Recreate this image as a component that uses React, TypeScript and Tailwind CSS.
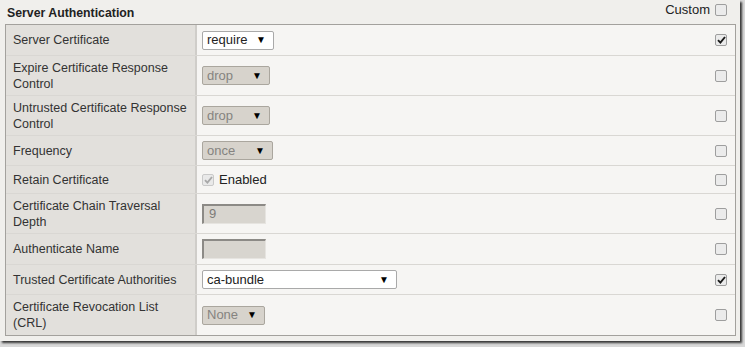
import React from "react";

const Arrow = () => <span className="text-[10px] leading-none text-black">▼</span>;

function Select({ value, width, disabled }: { value: string; width: number; disabled?: boolean }) {
  return (
    <div
      style={{ width }}
      className={
        "flex h-[19px] items-center justify-between rounded-[2px] border pl-[4px] pr-[7px] text-[13px] " +
        (disabled
          ? "border-[#aaa69e] bg-[#d7d3cc] text-[#858380]"
          : "border-[#a9a9a9] bg-white text-[#222]")
      }
    >
      <span>{value}</span>
      <Arrow />
    </div>
  );
}

function Check({ checked, disabled }: { checked?: boolean; disabled?: boolean }) {
  return (
    <div
      className={
        "flex h-[12px] w-[12px] items-center justify-center rounded-[2px] border " +
        (disabled ? "border-[#c9c9c9] bg-[#e9e9e9]" : "border-[#9e9e9e] bg-[#ebebeb]")
      }
    >
      {checked && (
        <svg width="9" height="8" viewBox="0 0 9 8">
          <path
            d="M1 4.2 L3.4 6.6 L8 1"
            fill="none"
            stroke={disabled ? "#a8a8a8" : "#1a1a1a"}
            strokeWidth="1.9"
          />
        </svg>
      )}
    </div>
  );
}

function Input({ value }: { value?: string }) {
  return (
    <div className="flex h-[20px] w-[64px] items-center border-t-2 border-l-2 border-r border-b border-t-[#8c8a86] border-l-[#8c8a86] border-r-[#e6e4e0] border-b-[#e6e4e0] bg-[#d8d5cf] pl-[5px] text-[13px] text-[#7d7b78]">
      {value}
    </div>
  );
}

type Row = { label: React.ReactNode; h: number; control: React.ReactNode; checked?: boolean };

const rows: Row[] = [
  { label: "Server Certificate", h: 30, control: <Select value="require" width={72} />, checked: true },
  { label: <>Expire Certificate Response<br />Control</>, h: 40, control: <Select value="drop" width={68} disabled /> },
  { label: <>Untrusted Certificate Response<br />Control</>, h: 40, control: <Select value="drop" width={68} disabled /> },
  { label: "Frequency", h: 30, control: <Select value="once" width={71} disabled /> },
  {
    label: "Retain Certificate",
    h: 28,
    control: (
      <div className="flex items-center gap-[5px]">
        <Check checked disabled />
        <span className="text-[13px] text-[#222]">Enabled</span>
      </div>
    ),
  },
  { label: <>Certificate Chain Traversal<br />Depth</>, h: 40, control: <Input value="9" /> },
  { label: "Authenticate Name", h: 31, control: <Input /> },
  { label: "Trusted Certificate Authorities", h: 30, control: <Select value="ca-bundle" width={195} />, checked: true },
  { label: <>Certificate Revocation List<br />(CRL)</>, h: 41, control: <Select value="None" width={63} disabled /> },
];

export default function App() {
  return (
    <div
      className="h-[347px] w-[745px] overflow-hidden bg-[#d9d9d9]"
      style={{ fontFamily: '"Liberation Sans", Arial, sans-serif' }}
    >
      <div className="h-[341px] w-[740px] bg-[#f0efec] shadow-[2px_2px_2px_rgba(0,0,0,0.75)]">
        <div className="flex h-[24px] items-start justify-between pl-[7px] pr-[13px]">
          <span className="mt-[5px] text-[12.3px] font-bold leading-[16px] text-[#222]">Server Authentication</span>
          <div className="mt-[2px] flex items-center gap-[5px]">
            <span className="text-[13px] leading-[16px] text-[#222]">Custom</span>
            <Check />
          </div>
        </div>
        <div className="ml-[5px] w-[731px] border border-[#a3a19d]">
          {rows.map((r, i) => (
            <div
              key={i}
              style={{ height: r.h }}
              className={"flex " + (i > 0 ? "border-t border-[#d9d7d3]" : "")}
            >
              <div className="flex w-[191px] items-center border-r-2 border-[#cfcdc9] bg-[#e2e0dc] pl-[7px] text-[12.5px] leading-[16px] text-[#333]">
                <span>{r.label}</span>
              </div>
              <div className="flex flex-1 items-center justify-between bg-[#f6f5f3] pl-[5px] pr-[8px]">
                {r.control}
                <Check checked={r.checked} />
              </div>
            </div>
          ))}
        </div>
      </div>
    </div>
  );
}
